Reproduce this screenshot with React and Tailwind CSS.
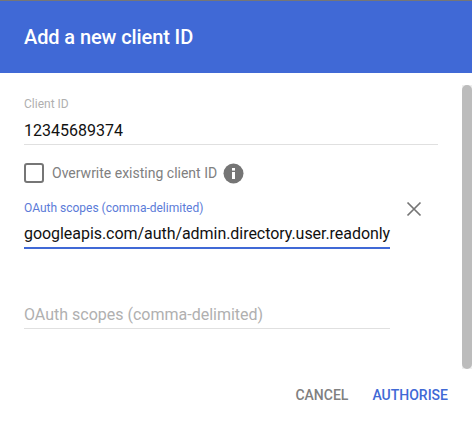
import React from "react";

export default function App() {
  return (
    <div className="w-[472px] h-[421px] bg-white overflow-hidden flex flex-col font-['Roboto',sans-serif]">
      <div className="h-px shrink-0 bg-[#767676]" />
      <div className="h-[72px] shrink-0 bg-[#4069d6] flex items-center px-6">
        <h1 className="text-[20px] font-medium text-white leading-none m-0 tracking-[-0.1px]">Add a new client ID</h1>
      </div>
      <div className="h-[296px] shrink-0 flex">
        <div className="flex-1 min-w-0 pl-6 pt-6">
          <div className="w-[414px] h-[48px] border-b border-[#e0e0e0]">
            <div className="text-[12px] leading-[14px] text-[#b0b0b0]">Client ID</div>
            <div className="mt-[8px] text-[16px] leading-[24px] text-[#111111]">12345689374</div>
          </div>
          <div className="mt-[18px] flex items-center h-5">
            <div className="w-5 h-5 rounded-[3px] border-2 border-[#767676]" />
            <span className="ml-2 text-[14px] text-[#808080]">Overwrite existing client ID</span>
            <svg className="ml-[6px]" width="21" height="21" viewBox="0 0 21 21" aria-hidden="true">
              <circle cx="10.5" cy="10.5" r="10" fill="#757575" />
              <rect x="9" y="9" width="3" height="7" fill="#fff" />
              <rect x="9" y="5" width="3" height="2.6" fill="#fff" />
            </svg>
          </div>
          <div className="mt-[18px] flex">
            <div className="w-[366px] h-[48px] border-b-2 border-[#4069d6]">
              <div className="text-[12px] leading-[14px] text-[#5b7bd8]">OAuth scopes (comma-delimited)</div>
              <div className="mt-[7px] text-[16px] leading-[24px] text-[#111111] whitespace-nowrap tracking-[-0.05px]">googleapis.com/auth/admin.directory.user.readonly</div>
            </div>
            <svg className="ml-[16px]" width="16" height="16" viewBox="0 0 16 16" aria-hidden="true">
              <path d="M1.5 1.5 L14.5 14.5 M14.5 1.5 L1.5 14.5" stroke="#757575" strokeWidth="1.7" fill="none" />
            </svg>
          </div>
          <div className="mt-[54px] w-[366px] h-[26px] border-b border-[#e0e0e0] text-[16px] leading-[24px] text-[#b0b0b0]">OAuth scopes (comma-delimited)</div>
        </div>
        <div className="w-[10px] shrink-0 bg-[#eeeeee] pt-3 bg-clip-content">
          <div className="h-full rounded-[5px] bg-[#bcbcbc]" />
        </div>
      </div>
      <div className="flex-1 flex justify-end items-start pt-[18px] pr-6 gap-6 text-[14px] font-medium leading-[16px]">
        <span className="text-[#808080]">CANCEL</span>
        <span className="text-[#4069d6]">AUTHORISE</span>
      </div>
    </div>
  );
}
